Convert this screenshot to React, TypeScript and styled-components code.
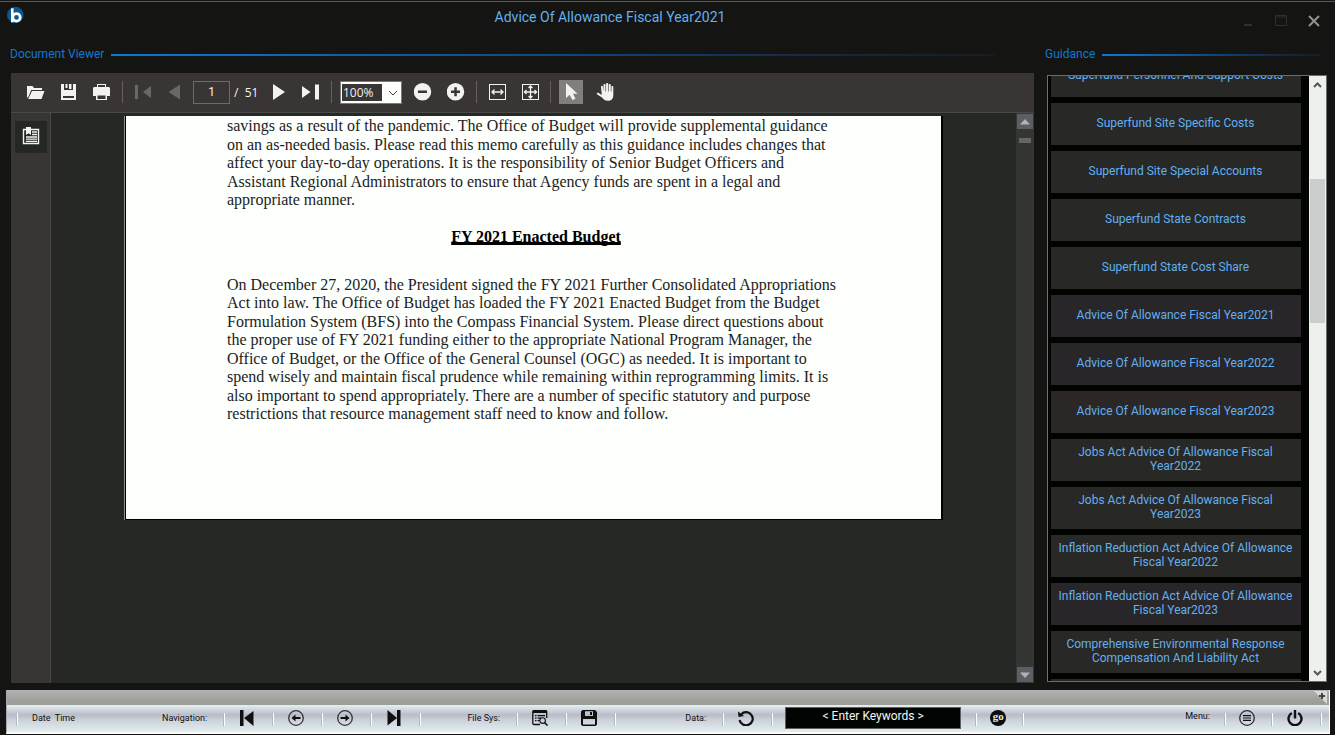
import React from "react";
import styled, { createGlobalStyle } from "styled-components";

const GlobalStyle = createGlobalStyle`
  *, *::before, *::after { box-sizing: border-box; }
  html, body { margin: 0; background: #141412; }
  body { font-family: Roboto, "Liberation Sans", sans-serif; }
  button, input, select { font-family: inherit; margin: 0; }
`;

/* ---------- window ---------- */

const Window = styled.div`
  display: flex;
  flex-direction: column;
  height: 100vh;
  padding-top: 1px;
  overflow: hidden;
  background: #141412;
`;

const TitleBar = styled.header`
  display: flex;
  height: 43px;
  flex: none;
  padding: 0 11px 0 7px;
  border-top: 1px solid #0a6cc4;
`;

const Logo = styled.svg`
  width: 17px;
  height: 18px;
  margin-top: 4px;
`;

const Title = styled.h1`
  flex: 1;
  margin: 0;
  padding-top: 6px;
  text-align: center;
  font-size: 14px;
  line-height: 18px;
  font-weight: 400;
  color: #62b0f0;
`;

const WindowControls = styled.div`
  display: flex;
  justify-content: flex-end;
  gap: 13px;
  width: 128px;
  padding-top: 9px;
`;

const PlainButton = styled.button`
  display: flex;
  align-items: center;
  justify-content: center;
  padding: 0;
  border: 0;
  background: none;
  color: inherit;
`;

const ControlButton = styled(PlainButton)`
  width: 20px;
  height: 20px;
`;

const Main = styled.main`
  display: flex;
  flex: 1;
  min-height: 0;
  gap: 11px;
  padding: 0 8px 7px 10px;
`;

const Group = styled.section<{ $fixed?: boolean }>`
  display: flex;
  flex-direction: column;
  min-width: 0;
  flex: ${(p) => (p.$fixed ? "0 0 282px" : "1")};
`;

const GroupHeader = styled.div<{ $inset: number }>`
  display: flex;
  align-items: center;
  flex: none;
  gap: 7px;
  height: 19px;
  padding-right: ${(p) => p.$inset}px;
`;

const GroupTitle = styled.h2`
  margin: 0;
  font-size: 12px;
  line-height: 16px;
  font-weight: 400;
  color: #0f78d2;
`;

const GroupRule = styled.div`
  flex: 1;
  height: 2px;
  margin-top: 2px;
  background: linear-gradient(90deg, #0a78d6 0%, #0c64b4 22%, #10508e 42%, #123660 66%, #14283c 84%, #161d20 100%);
`;

/* ---------- document viewer ---------- */

const Viewer = styled.div`
  display: flex;
  flex-direction: column;
  flex: 1;
  min-height: 0;
  margin: 10px 0 0 1px;
`;

const Toolbar = styled.div`
  display: flex;
  align-items: center;
  flex: none;
  height: 40px;
  padding: 0 0 2px 13px;
  background: #393534;
  border-bottom: 1px solid #484a47;
  color: #f2f2f0;
`;

const ToolGroup = styled.div<{ $gap?: number }>`
  display: flex;
  align-items: center;
  gap: ${(p) => p.$gap ?? 9}px;
`;

const ToolSeparator = styled.div`
  width: 1px;
  height: 22px;
  margin: 0 8px;
  background: #68605c;
`;

const ToolButton = styled(PlainButton)<{ $active?: boolean }>`
  width: 24px;
  height: 24px;
  background: ${(p) => (p.$active ? "#817e7d" : "none")};
  &:disabled { color: #6a6866; }
`;

const PageField = styled.input`
  width: 37px;
  height: 23px;
  margin: 2px 4px 0 6px;
  padding: 0 0 2px;
  border: 1px solid #6c6b69;
  background: #393534;
  color: #f2f2f0;
  font-size: 12px;
  text-align: center;
`;

const PageCount = styled.span`
  width: 33px;
  padding-top: 3px;
  font-family: "Open Sans", sans-serif;
  font-size: 12px;
  line-height: 16px;
  white-space: pre;
`;

const ZoomBox = styled.div`
  position: relative;
  width: 62px;
  height: 23px;
  margin: 2px 9px 0 0;
`;

const ZoomSelect = styled.select`
  appearance: none;
  width: 100%;
  height: 100%;
  padding: 0 22px 1px 2px;
  border: 1px solid #77797a;
  border-radius: 0;
  color: #f2f2f0;
  font-family: "Open Sans", sans-serif;
  font-size: 12px;
  background: linear-gradient(#393534, #393534) 1px 2px / 40px 17px no-repeat #fdfffd;
`;

const ZoomArrow = styled.svg`
  position: absolute;
  right: 4px;
  top: 8px;
  pointer-events: none;
`;

const ViewerBody = styled.div`
  display: flex;
  flex: 1;
  min-height: 0;
`;

const SideStrip = styled.aside`
  width: 40px;
  flex: none;
  padding: 8px 3px 0 4px;
  background: #393534;
  border-right: 1px solid #484a47;
`;

const BookmarkButton = styled(PlainButton)`
  width: 32px;
  height: 32px;
  padding-bottom: 2px;
  background: #252724;
  color: #f2f2f0;
`;

const DocumentArea = styled.div`
  display: flex;
  flex: 1;
  align-items: flex-start;
  justify-content: center;
  min-width: 0;
  padding: 3px 0 0 1px;
  overflow: hidden;
  background: #262825;
`;

const Page = styled.article`
  width: 818px;
  height: 404px;
  padding: 1px 100px 0 101px;
  background: #fdfffd;
  border: solid #000;
  border-width: 0 2px 1px 1px;
  box-shadow: -1px 0 0 #8f918f;
  font-family: "Liberation Serif", serif;
  font-size: 16px;
  line-height: 18px;
  color: #1c1c1c;
`;

const Paragraph = styled.p<{ $height: number }>`
  display: flex;
  flex-direction: column;
  justify-content: space-between;
  height: ${(p) => p.$height}px;
  margin: 0;
  white-space: nowrap;
`;

const Heading = styled.h3`
  margin: 19px 0 30px;
  padding-left: 4px;
  font-size: 16px;
  line-height: 18px;
  text-align: center;
  text-decoration: underline;
  text-decoration-thickness: 3px;
  text-underline-offset: 0;
  text-decoration-skip-ink: none;
  color: #000;
`;

const DarkScrollbar = styled.div`
  display: flex;
  flex-direction: column;
  align-items: center;
  flex: none;
  width: 18px;
  padding: 1px 0;
  background: #343634;
`;

const DarkScrollButton = styled(PlainButton)`
  width: 16px;
  height: 15px;
  background: #5b5e62;
`;

const DarkThumb = styled.div`
  width: 12px;
  height: 5px;
  margin: 9px 0 auto;
  background: #656664;
`;

/* ---------- guidance list ---------- */

const GuidanceBox = styled.div`
  display: flex;
  flex: 1;
  min-height: 0;
  margin: 12px 0 1px 2px;
  border: 1px solid #6c6e6c;
  background: #020402;
`;

const GuidanceList = styled.ul`
  display: flex;
  flex-direction: column;
  flex: 1;
  gap: 6px;
  margin: 0;
  padding: 0 8px 0 3px;
  overflow: hidden;
  list-style: none;
`;

const GuidanceItem = styled.li`
  flex: none;
  &:first-child { margin-top: -21px; }
`;

const GuidanceButton = styled(PlainButton)<{ $tone?: string }>`
  width: 100%;
  height: 42px;
  padding: 0 5px 2px 4px;
  background: ${(p) => p.$tone ?? "#282826"};
  color: #62b0f0;
  font-size: 12px;
  line-height: 14px;
  text-align: center;
`;

const LightScrollbar = styled.div`
  display: flex;
  flex-direction: column;
  flex: none;
  width: 17px;
  padding: 0 1px;
  background: #eef0ed;
`;

const LightScrollButton = styled(PlainButton)`
  width: 15px;
  height: 17px;
`;

const LightThumb = styled.div`
  height: 144px;
  margin: 86px 0 auto;
  background: #cbcecd;
`;

/* ---------- bottom bar ---------- */

const BottomBar = styled.footer`
  flex: none;
  margin: 0 5px 1px 6px;
  border: solid #fff;
  border-width: 0 1px 2px 0;
  border-left: 1px solid #a4a6b0;
`;

const Grip = styled.div`
  display: flex;
  justify-content: flex-end;
  height: 15px;
  padding-right: 2px;
  border-top: 1px solid #b0b3bb;
  background: linear-gradient(#b0b1ae, #a0a19d 60%, #9c9d98);
`;

const BarRow = styled.div`
  display: flex;
  align-items: center;
  height: 27px;
  padding: 0 7px 1px 9px;
  background: linear-gradient(#e4f0f2 0%, #c3c9d2 28%, #b9bcc6 36%, #ccd1da 56%, #d6dfe4 76%, #e2efef 100%);
  color: #101010;
`;

const BarSeparator = styled.div`
  flex: none;
  width: 2px;
  height: 13px;
  margin-top: 2px;
  background: #fdfffd;
  border-left: 1px solid #b4b6c0;
`;

const BarLabel = styled.span<{ $width?: number; $start?: boolean }>`
  flex: ${(p) => (p.$width ? `0 0 ${p.$width}px` : "1")};
  padding: ${(p) => (p.$start ? "0 0 0 14px" : p.$width ? "0 16px 0 0" : "0 14px 4px 0")};
  text-align: ${(p) => (p.$start ? "left" : "right")};
  font-size: 9px;
  line-height: 12px;
  white-space: pre;
`;

const BarButton = styled(PlainButton)<{ $width?: number }>`
  flex: none;
  width: ${(p) => p.$width ?? 47}px;
  height: 20px;
  padding-right: 3px;
`;

const KeywordField = styled.input`
  flex: none;
  width: 176px;
  height: 22px;
  margin: 0 14px 0 12px;
  padding: 0 0 4px;
  border: 1px solid #5d605e;
  background: #020402;
  color: #f4f6f4;
  font-size: 12px;
  text-align: center;
  &::placeholder { color: #f4f6f4; opacity: 1; }
`;

/* ---------- icons ---------- */

const Icon = ({ size = 18, children }: { size?: number; children: React.ReactNode }) => (
  <svg width={size} height={size} viewBox={`0 0 ${size} ${size}`} fill="currentColor" aria-hidden="true">
    {children}
  </svg>
);

const OpenIcon = () => (
  <Icon><path d="M0 15V3h5.500l1.500 2h8v2H4.200L1.500 13.500zM5 8h12.500l-3 8H1.200z" /></Icon>
);
const SaveIcon = () => (
  <Icon>
    <path d="M1 1h3v6h9V1h3v16H1zM3 13v2h11v-2zM5.500 1h2v4h-2zM9 1h2.500v5H9z" fillRule="evenodd" />
  </Icon>
);
const PrintIcon = () => (
  <Icon>
    <path d="M4 1h9v3h3l1 1v8h-3v4H3v-4H0V5l1-1h3zM5 2v2h7V2zM4.500 12.500V16h8v-3.500z" fillRule="evenodd" />
  </Icon>
);
const FirstPageIcon = () => (<Icon><path d="M1 2h3v14H1zM17 3v12L9 9z" /></Icon>);
const PrevPageIcon = () => (<Icon><path d="M14 1.500v15L2.500 9z" /></Icon>);
const NextPageIcon = () => (<Icon><path d="M3 1v16L15 9z" /></Icon>);
const LastPageIcon = () => (<Icon><path d="M0 3v12l8.500-6zM13 1.500h4v15h-4z" /></Icon>);
const ZoomOutIcon = () => (
  <Icon><path d="M8.500 0a8.500 8.500 0 1 1 0 17.500A8.500 8.500 0 0 1 8.500 0zM4 7.500v2.500h9V7.500z" fillRule="evenodd" /></Icon>
);
const ZoomInIcon = () => (
  <Icon>
    <path d="M8.500 0a8.500 8.500 0 1 1 0 17.500A8.500 8.500 0 0 1 8.500 0zM7.300 4.300v3.200H4V10h3.300v3.200h2.500V10H13V7.500H9.800V4.300z" fillRule="evenodd" />
  </Icon>
);
const FitWidthIcon = () => (
  <Icon>
    <rect x="1.500" y="1.500" width="16" height="15" fill="none" stroke="currentColor" />
    <path d="M4 9h11M6.500 6.500L4 9l2.500 2.500M12.500 6.500L15 9l-2.500 2.500" fill="none" stroke="currentColor" strokeWidth="1.300" />
  </Icon>
);
const FitPageIcon = () => (
  <Icon>
    <rect x="1.500" y="1.500" width="16" height="15" fill="none" stroke="currentColor" />
    <path d="M3 9h13M9.500 2.500v13M5.500 7L3.500 9l2 2M13.500 7l2 2-2 2M7.500 5l2-2 2 2M7.500 13l2 2 2-2" fill="none" stroke="currentColor" strokeWidth="1.300" />
  </Icon>
);
const PointerIcon = () => (<Icon><path d="M4 0v15l3.600-3.300L10.500 17l3-1.300-2.500-5h4.600z" /></Icon>);
const HandIcon = () => (
  <Icon>
    <path d="M5 3.700c0-1.200 1.800-1.200 1.900 0L7.500 8.500V2c0-1.300 2-1.300 2 0v6.500h.6V1c0-1.200 2.100-1.200 2.100 0v7.500h.6V2c0-1.200 2-1.200 2 0v6.500h.6V4c0-1.200 1.900-1.200 1.900 0v8c0 4-2 5.800-5.500 5.800-2.900 0-4-1.200-5.500-3L1 11.300c-.8-1.100.5-2.100 1.700-1.400L5.800 12z" />
  </Icon>
);
const BookmarkListIcon = () => (
  <Icon>
    <path d="M1.500 2.500h15v14h-15z" fill="none" stroke="currentColor" strokeWidth="1.400" />
    <path d="M4 0h5v8L6.500 6.200 4 8z" />
    <path d="M10 5h5M10 7.500h5M4 10h11M4 12.200h11M4 14.400h11" fill="none" stroke="currentColor" strokeWidth="1.300" />
  </Icon>
);

const BarFirstIcon = () => (<Icon size={16}><path d="M1 0h3.500v16H1zM14.500 1v15L5 8z" /></Icon>);
const BarLastIcon = () => (<Icon size={16}><path d="M1.500 0v15.500L11 8zM11 0h3.500v16H11z" /></Icon>);
const BarArrowIcon = ({ forward }: { forward?: boolean }) => (
  <Icon size={16}>
    <circle cx="8" cy="8" r="7.300" fill="none" stroke="#333" strokeWidth="1.300" />
    <path d={forward ? "M3.500 7h5V4.500L12.500 8l-4 3.500V9h-5z" : "M12.500 7h-5V4.500L3.500 8l4 3.500V9h5z"} />
  </Icon>
);
const BrowseIcon = () => (
  <Icon size={16}>
    <path
      d="M8 14.500H2A1.200 1.200 0 0 1 .8 13.300V1.800A1.200 1.200 0 0 1 2 .6h11.500a1.200 1.200 0 0 1 1.200 1.200V8"
      fill="none"
      stroke="currentColor"
      strokeWidth="1.300"
    />
    <path d="M1 .5h14v2.500H1zM3 5h1.500v1.200H3zM5.500 5H13v1.200H5.500zM3 7.500h1.500v1.200H3zM5.500 7.500H9v1.200H5.500zM3 10h1.500v1.200H3zM5.500 10h2v1.200h-2z" />
    <circle cx="10.600" cy="10.600" r="2.800" fill="none" stroke="currentColor" strokeWidth="1.100" />
    <path d="M12.600 12.600l3 3" stroke="currentColor" strokeWidth="1.500" />
  </Icon>
);
const BarSaveIcon = () => (
  <Icon size={16}>
    <path d="M1.500 0H14l2 2v12.500L14.500 16h-13L0 14.500v-13zM4 1.200V6h8V1.200zM9 2h2v3H9zM2 9v5.500h12V9z" fillRule="evenodd" />
  </Icon>
);
const RefreshIcon = () => (
  <Icon size={16}>
    <path d="M3.300 4.200A6.600 6.600 0 1 1 1.600 10" fill="none" stroke="currentColor" strokeWidth="2.200" />
    <path d="M0 1.500l.5 5.500L6 6z" />
  </Icon>
);
const MenuIcon = () => (
  <Icon size={16}>
    <circle cx="8" cy="8" r="7.300" fill="none" stroke="#2c2c2c" strokeWidth="1.300" />
    <path d="M4 5h8v1.200H4zM4 7.400h8v1.200H4zM4 9.800h8V11H4z" />
  </Icon>
);
const PowerIcon = () => (
  <Icon size={16}>
    <path d="M4.800 3A6.500 6.500 0 1 0 11.200 3" fill="none" stroke="currentColor" strokeWidth="2.400" />
    <path d="M6.800 0h2.400v8.500H6.800z" />
  </Icon>
);

const GoBadge = styled.span`
  width: 16px;
  height: 16px;
  border-radius: 8px;
  background: #0c0c0c;
  color: #e6eaea;
  font-family: "Liberation Serif", serif;
  font-size: 11px;
  line-height: 12px;
  font-weight: 700;
  text-align: center;
`;

/* ---------- content ---------- */

const intro = [
  "savings as a result of the pandemic. The Office of Budget will provide supplemental guidance",
  "on an as-needed basis. Please read this memo carefully as this guidance includes changes that",
  "affect your day-to-day operations. It is the responsibility of Senior Budget Officers and",
  "Assistant Regional Administrators to ensure that Agency funds are spent in a legal and",
  "appropriate manner.",
];

const enacted = [
  "On December 27, 2020, the President signed the FY 2021 Further Consolidated Appropriations",
  "Act into law. The Office of Budget has loaded the FY 2021 Enacted Budget from the Budget",
  "Formulation System (BFS) into the Compass Financial System. Please direct questions about",
  "the proper use of FY 2021 funding either to the appropriate National Program Manager, the",
  "Office of Budget, or the Office of the General Counsel (OGC) as needed. It is important to",
  "spend wisely and maintain fiscal prudence while remaining within reprogramming limits. It is",
  "also important to spend appropriately. There are a number of specific statutory and purpose",
  "restrictions that resource management staff need to know and follow.",
];

const guidance: { name: string; tone?: string }[] = [
  { name: "Superfund Personnel And Support Costs" },
  { name: "Superfund Site Specific Costs" },
  { name: "Superfund Site Special Accounts" },
  { name: "Superfund State Contracts" },
  { name: "Superfund State Cost Share" },
  { name: "Advice Of Allowance Fiscal Year2021", tone: "#292629" },
  { name: "Advice Of Allowance Fiscal Year2022", tone: "#292629" },
  { name: "Advice Of Allowance Fiscal Year2023", tone: "#2b2726" },
  { name: "Jobs Act Advice Of Allowance Fiscal Year2022" },
  { name: "Jobs Act Advice Of Allowance Fiscal Year2023" },
  { name: "Inflation Reduction Act Advice Of Allowance Fiscal Year2022" },
  { name: "Inflation Reduction Act Advice Of Allowance Fiscal Year2023", tone: "#292629" },
  { name: "Comprehensive Environmental Response Compensation And Liability Act" },
  { name: "" },
];

const Lines = ({ lines, height }: { lines: string[]; height: number }) => (
  <Paragraph $height={height}>
    {lines.map((line) => (
      <span key={line}>{line}</span>
    ))}
  </Paragraph>
);

export default function App() {
  return (
    <Window>
      <GlobalStyle />
      <TitleBar>
        <Logo viewBox="0 0 17 18" aria-hidden="true">
          <circle cx="8.300" cy="9" r="8.300" fill="#0b5590" />
          <path d="M5.300 2.300v14" stroke="#fff" strokeWidth="2.600" fill="none" />
          <circle cx="9.500" cy="11.400" r="3.700" stroke="#fff" strokeWidth="2.700" fill="none" />
        </Logo>
        <Title>Advice Of Allowance Fiscal Year2021</Title>
        <WindowControls>
          <ControlButton aria-label="Minimize">
            <svg width="12" height="12"><path d="M2 10h8" stroke="#30302e" strokeWidth="2" /></svg>
          </ControlButton>
          <ControlButton aria-label="Maximize">
            <svg width="12" height="12"><path d="M.5.500h11v10H.5zM1 2h10" stroke="#30302e" fill="none" /></svg>
          </ControlButton>
          <ControlButton aria-label="Close">
            <svg width="12" height="12"><path d="M1 1l10 10M11 1L1 11" stroke="#92928f" strokeWidth="2" /></svg>
          </ControlButton>
        </WindowControls>
      </TitleBar>

      <Main>
        <Group>
          <GroupHeader $inset={40}>
            <GroupTitle>Document Viewer</GroupTitle>
            <GroupRule />
          </GroupHeader>
          <Viewer>
            <Toolbar>
              <ToolGroup>
                <ToolButton aria-label="Open"><OpenIcon /></ToolButton>
                <ToolButton aria-label="Save"><SaveIcon /></ToolButton>
                <ToolButton aria-label="Print"><PrintIcon /></ToolButton>
              </ToolGroup>
              <ToolSeparator />
              <ToolGroup $gap={8}>
                <ToolButton aria-label="First page" disabled><FirstPageIcon /></ToolButton>
                <ToolButton aria-label="Previous page" disabled><PrevPageIcon /></ToolButton>
              </ToolGroup>
              <PageField aria-label="Page" defaultValue="1" />
              <PageCount>{"/  51"}</PageCount>
              <ToolGroup $gap={8}>
                <ToolButton aria-label="Next page"><NextPageIcon /></ToolButton>
                <ToolButton aria-label="Last page"><LastPageIcon /></ToolButton>
              </ToolGroup>
              <ToolSeparator />
              <ZoomBox>
                <ZoomSelect aria-label="Zoom" defaultValue="100%">
                  <option>100%</option>
                </ZoomSelect>
                <ZoomArrow width="10" height="8"><path d="M1 2l4 4 4-4" stroke="#444" fill="none" /></ZoomArrow>
              </ZoomBox>
              <ToolGroup>
                <ToolButton aria-label="Zoom out"><ZoomOutIcon /></ToolButton>
                <ToolButton aria-label="Zoom in"><ZoomInIcon /></ToolButton>
              </ToolGroup>
              <ToolSeparator />
              <ToolGroup>
                <ToolButton aria-label="Fit width"><FitWidthIcon /></ToolButton>
                <ToolButton aria-label="Fit page"><FitPageIcon /></ToolButton>
              </ToolGroup>
              <ToolSeparator />
              <ToolGroup $gap={10}>
                <ToolButton aria-label="Select" $active><PointerIcon /></ToolButton>
                <ToolButton aria-label="Pan"><HandIcon /></ToolButton>
              </ToolGroup>
            </Toolbar>
            <ViewerBody>
              <SideStrip>
                <BookmarkButton aria-label="Bookmarks"><BookmarkListIcon /></BookmarkButton>
              </SideStrip>
              <DocumentArea>
                <Page>
                  <Lines lines={intro} height={92} />
                  <Heading>FY 2021 Enacted Budget</Heading>
                  <Lines lines={enacted} height={147} />
                </Page>
              </DocumentArea>
              <DarkScrollbar>
                <DarkScrollButton aria-label="Scroll up">
                  <svg width="10" height="6"><path d="M0 5.500L5 0l5 5.500z" fill="#b0b2b4" /></svg>
                </DarkScrollButton>
                <DarkThumb />
                <DarkScrollButton aria-label="Scroll down">
                  <svg width="10" height="6"><path d="M0 .5L5 6 10 .5z" fill="#b0b2b4" /></svg>
                </DarkScrollButton>
              </DarkScrollbar>
            </ViewerBody>
          </Viewer>
        </Group>

        <Group $fixed>
          <GroupHeader $inset={6}>
            <GroupTitle>Guidance</GroupTitle>
            <GroupRule />
          </GroupHeader>
          <GuidanceBox>
            <GuidanceList>
              {guidance.map((item, i) => (
                <GuidanceItem key={i}>
                  <GuidanceButton $tone={item.tone}>{item.name}</GuidanceButton>
                </GuidanceItem>
              ))}
            </GuidanceList>
            <LightScrollbar>
              <LightScrollButton aria-label="Scroll list up">
                <svg width="9" height="8"><path d="M1 6l3.500-3.500L8 6" stroke="#555" strokeWidth="2" fill="none" /></svg>
              </LightScrollButton>
              <LightThumb />
              <LightScrollButton aria-label="Scroll list down">
                <svg width="9" height="8"><path d="M1 2l3.500 3.500L8 2" stroke="#555" strokeWidth="2" fill="none" /></svg>
              </LightScrollButton>
            </LightScrollbar>
          </GuidanceBox>
        </Group>
      </Main>

      <BottomBar>
        <Grip>
          <svg width="13" height="14" aria-hidden="true">
            <path d="M0 0h13v13z" fill="#dcdad0" />
            <path d="M8 2v6M5 5h6" stroke="#444" strokeWidth="2" />
          </svg>
        </Grip>
        <BarRow>
          <BarSeparator />
          <BarLabel $width={144} $start>{"Date  Time"}</BarLabel>
          <BarLabel $width={61}>Navigation:</BarLabel>
          <BarSeparator />
          <BarButton aria-label="First"><BarFirstIcon /></BarButton>
          <BarSeparator />
          <BarButton aria-label="Previous"><BarArrowIcon /></BarButton>
          <BarSeparator />
          <BarButton aria-label="Next"><BarArrowIcon forward /></BarButton>
          <BarSeparator />
          <BarButton aria-label="Last"><BarLastIcon /></BarButton>
          <BarSeparator />
          <BarLabel $width={95}>File Sys:</BarLabel>
          <BarSeparator />
          <BarButton aria-label="Browse"><BrowseIcon /></BarButton>
          <BarSeparator />
          <BarButton aria-label="Save file"><BarSaveIcon /></BarButton>
          <BarSeparator />
          <BarLabel $width={106}>Data:</BarLabel>
          <BarSeparator />
          <BarButton aria-label="Refresh"><RefreshIcon /></BarButton>
          <BarSeparator />
          <KeywordField aria-label="Keywords" placeholder="&lt; Enter Keywords &gt;" />
          <BarSeparator />
          <BarButton aria-label="Go" $width={45}><GoBadge>go</GoBadge></BarButton>
          <BarSeparator />
          <BarLabel>Menu:</BarLabel>
          <BarSeparator />
          <BarButton aria-label="Menu" $width={45}><MenuIcon /></BarButton>
          <BarSeparator />
          <BarButton aria-label="Exit"><PowerIcon /></BarButton>
          <BarSeparator />
        </BarRow>
      </BottomBar>
    </Window>
  );
}
